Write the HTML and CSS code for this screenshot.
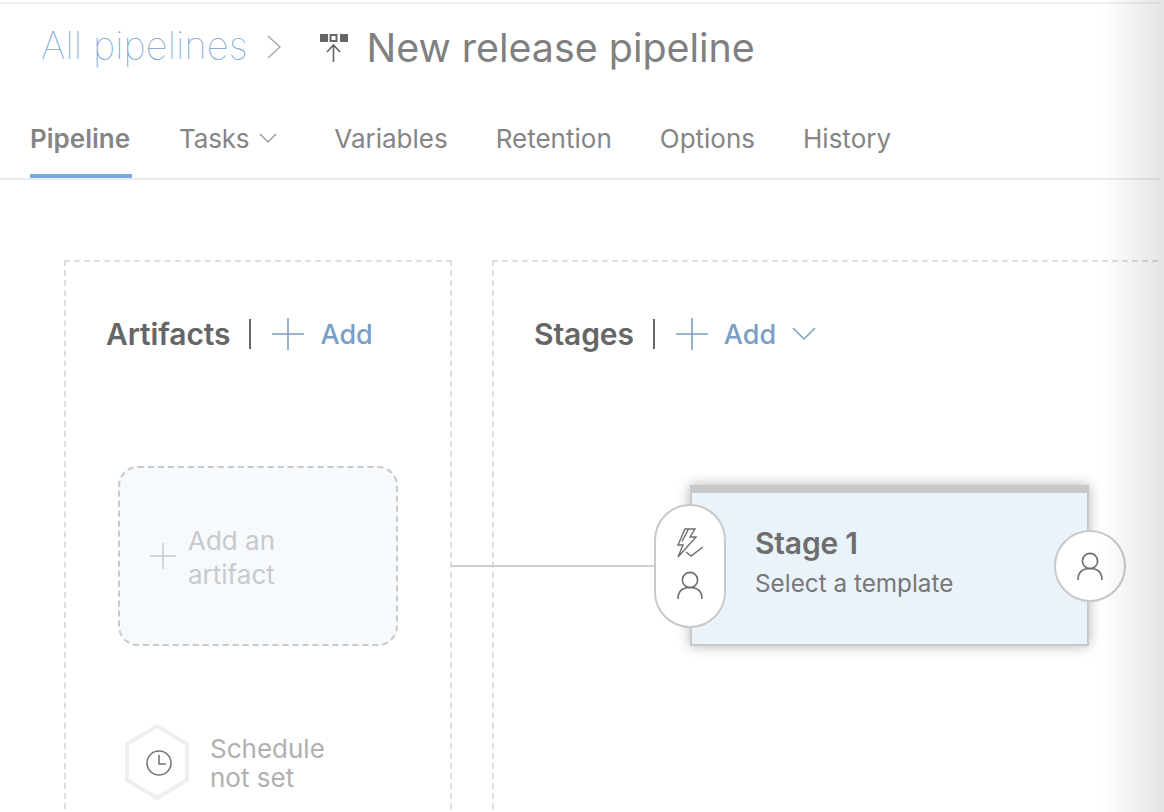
FILE: index.html
```html
<!DOCTYPE html>
<html>
	<head>
		<meta charset="utf-8">
		<title>New release pipeline</title>
		<link rel="stylesheet" href="styles.css">
	</head>
	<body>
		<div class="page">
			<div class="titlebar">
				<a class="crumb">All pipelines</a>
				<svg class="crumb-sep" width="14" height="24" viewBox="0 0 14 24"><path d="M1 1 L13 12 L1 23" fill="none" stroke="#a8a8a8" stroke-width="1.5"/></svg>
				<svg class="release-icon" width="28" height="28" viewBox="0 0 28 28">
					<rect x="0" y="0" width="8" height="8" fill="#666"/>
					<rect x="10.5" y="1" width="6" height="6" fill="#fff" stroke="#666" stroke-width="2"/>
					<rect x="20" y="0" width="8" height="8" fill="#666"/>
					<path d="M13.5 28 V11 M7 18 L13.5 11 L20 18" fill="none" stroke="#666" stroke-width="1.6"/>
				</svg>
				<h1 class="title">New release pipeline</h1>
			</div>

			<div class="tabs">
				<a class="tab active">Pipeline</a>
				<a class="tab tab-menu">Tasks
					<svg width="18" height="10" viewBox="0 0 18 10"><path d="M1 1 L9 9 L17 1" fill="none" stroke="#8c8c8c" stroke-width="1.2"/></svg>
				</a>
				<a class="tab">Variables</a>
				<a class="tab">Retention</a>
				<a class="tab">Options</a>
				<a class="tab">History</a>
			</div>

			<div class="canvas">
				<div class="panel artifacts">
					<div class="panel-head">
						<span class="panel-title">Artifacts</span>
						<span class="divider"></span>
						<svg class="plus" width="32" height="32" viewBox="0 0 32 32"><path d="M16 0 V32 M0 16 H32" stroke="#7a9fc6" stroke-width="1.6"/></svg>
						<a class="add">Add</a>
					</div>
					<div class="add-artifact">
						<svg width="26" height="26" viewBox="0 0 26 26"><path d="M13 0 V26 M0 13 H26" stroke="#c9c9c9" stroke-width="1.5"/></svg>
						<span>Add an<br>artifact</span>
					</div>
					<div class="schedule">
						<svg width="70" height="78" viewBox="0 0 70 78">
							<path d="M35 3 L65 21 V57 L35 75 L5 57 V21 Z" fill="#fff" stroke="#efefef" stroke-width="4"/>
							<circle cx="37" cy="40" r="12" fill="none" stroke="#777" stroke-width="1.6"/>
							<path d="M37 32 V41 H44" fill="none" stroke="#777" stroke-width="1.6"/>
						</svg>
						<span>Schedule<br>not set</span>
					</div>
				</div>

				<div class="panel stages">
					<div class="panel-head">
						<span class="panel-title">Stages</span>
						<span class="divider"></span>
						<svg class="plus" width="32" height="32" viewBox="0 0 32 32"><path d="M16 0 V32 M0 16 H32" stroke="#7a9fc6" stroke-width="1.6"/></svg>
						<a class="add">Add</a>
						<svg class="add-caret" width="24" height="14" viewBox="0 0 24 14"><path d="M1 1 L12 12 L23 1" fill="none" stroke="#7a9fc6" stroke-width="1.5"/></svg>
					</div>
					<div class="stage">
						<div class="stage-name">Stage 1</div>
						<div class="stage-sub">Select a template</div>
						<div class="pre-deploy">
							<svg width="30" height="30" viewBox="0 0 30 30">
								<path d="M10 1 H20 L15 9 H21 L3 29 L8 17 H3 Z M13.5 1 L7 13.5" fill="none" stroke="#6e6e6e" stroke-width="1.4"/>
								<path d="M11 24 L16 28 L28 19" fill="none" stroke="#6e6e6e" stroke-width="1.4"/>
							</svg>
							<svg width="28" height="28" viewBox="0 0 28 28">
								<circle cx="14" cy="9" r="7.6" fill="none" stroke="#6e6e6e" stroke-width="1.6"/>
								<path d="M2 28 C2 20 7 16.5 14 16.5 C21 16.5 26 20 26 28" fill="none" stroke="#6e6e6e" stroke-width="1.6"/>
							</svg>
						</div>
						<div class="post-deploy">
							<svg width="28" height="28" viewBox="0 0 28 28">
								<circle cx="14" cy="9" r="7.6" fill="none" stroke="#6e6e6e" stroke-width="1.6"/>
								<path d="M2 28 C2 20 7 16.5 14 16.5 C21 16.5 26 20 26 28" fill="none" stroke="#6e6e6e" stroke-width="1.6"/>
							</svg>
						</div>
					</div>
				</div>
				<div class="connector"></div>
			</div>
			<div class="edge-shade"></div>
		</div>
	</body>
</html>
```

FILE: styles.css
```css
html, body {
	margin: 0;
	padding: 0;
	background-color: white;
}
.page {
	position: relative;
	width: 1164px;
	height: 812px;
	overflow: hidden;
	font-family: Inter, "Liberation Sans", sans-serif;
	color: #7a7a7a;
}
.titlebar {
	display: flex;
	align-items: center;
	height: 88px;
	margin: 2px 4px 0 0;
	padding-left: 41px;
	border-top: 2px solid #f1f1f1;
	box-sizing: border-box;
}
.crumb {
	margin-bottom: 4px;
	font-size: 38px;
	font-weight: 100;
	color: #6f9fd0;
	letter-spacing: 0.15px;
}
.crumb-sep {
	margin-left: 19px;
}
.release-icon {
	margin: 2px 19px 0 39px;
}
.title {
	margin: 2px 0 0;
	font-size: 39.4px;
	font-weight: 400;
	color: #808080;
}
.tabs {
	display: flex;
	height: 90px;
	margin-right: 4px;
	padding-left: 30px;
	gap: 48px;
	border-bottom: 2px solid #ebebeb;
	box-sizing: border-box;
}
.tab {
	display: flex;
	align-items: center;
	gap: 10px;
	height: 88px;
	padding-top: 8px;
	box-sizing: border-box;
	font-size: 26px;
	color: #858585;
}
.tab.active {
	margin-right: -1px;
	padding: 12px 2px 0 0;
	font-weight: 600;
	border-bottom: 4px solid #7aa9de;
}
.tab-menu {
	margin-right: 9px;
	letter-spacing: -0.2px;
}
.canvas {
	position: relative;
	display: flex;
	gap: 40px;
	padding: 80px 0 0 64px;
}
.panel {
	height: 700px;
	border: 2px dashed #dedede;
	box-sizing: border-box;
}
.artifacts {
	flex: 0 0 388px;
	padding-left: 40px;
}
.stages {
	flex: 0 0 666px;
	border-right: none;
	padding-left: 40px;
}
.panel-head {
	display: flex;
	align-items: center;
	height: 32px;
	margin-top: 56px;
}
.panel-title {
	font-size: 30px;
	font-weight: 600;
	letter-spacing: -0.1px;
	color: #666;
}
.divider {
	width: 2px;
	height: 30px;
	margin: 0 21px 0 19px;
	background-color: #666;
}
.plus {
	margin-right: 16px;
}
.add {
	font-size: 27px;
	font-weight: 500;
	color: #7a9fc6;
}
.add-caret {
	margin-left: 16px;
}
.add-artifact {
	display: flex;
	align-items: center;
	gap: 12px;
	width: 280px;
	height: 180px;
	margin: 116px 0 0 12px;
	padding-left: 30px;
	border: 2px dashed #c9c9c9;
	border-radius: 20px;
	background-color: #f7fafd;
	box-sizing: border-box;
	font-size: 26px;
	line-height: 34px;
	color: #c9c9c9;
}
.add-artifact span {
	padding-top: 4px;
}
.schedule {
	display: flex;
	align-items: center;
	gap: 18px;
	margin: 77px 0 0 16px;
	font-size: 26px;
	line-height: 29px;
	color: #b0b0b0;
}
.schedule span {
	padding-top: 2px;
}
.stage {
	position: relative;
	width: 399px;
	height: 161px;
	margin: 135px 0 0 156px;
	padding: 32px 0 0 63px;
	border: 2px solid #c9c9c9;
	border-top: 8px solid #c8c8c8;
	background-color: #eaf2fa;
	box-sizing: border-box;
	box-shadow: 0 0 12px rgba(0, 0, 0, 0.3);
}
.stage-name {
	font-size: 30px;
	font-weight: 600;
	line-height: 36px;
	letter-spacing: -0.2px;
	color: #6e6e6e;
}
.stage-sub {
	margin-top: 7px;
	font-size: 24.3px;
	line-height: 30px;
	color: #777;
}
.pre-deploy, .post-deploy {
	position: absolute;
	display: flex;
	flex-direction: column;
	align-items: center;
	justify-content: center;
	width: 72px;
	border: 2px solid #c9c9c9;
	border-radius: 36px;
	background-color: white;
	box-sizing: border-box;
}
.pre-deploy {
	left: -38px;
	top: 11px;
	height: 124px;
	padding-bottom: 6px;
	gap: 13px;
}
.post-deploy {
	left: 362px;
	top: 37px;
	height: 72px;
}
.connector {
	position: absolute;
	left: 451px;
	top: 385px;
	width: 204px;
	height: 2px;
	background-color: #d0d0d0;
}
.edge-shade {
	position: absolute;
	right: 0;
	top: 0;
	width: 64px;
	height: 100%;
	background: linear-gradient(to right, rgba(0, 0, 0, 0), rgba(0, 0, 0, 0.1));
}
```
